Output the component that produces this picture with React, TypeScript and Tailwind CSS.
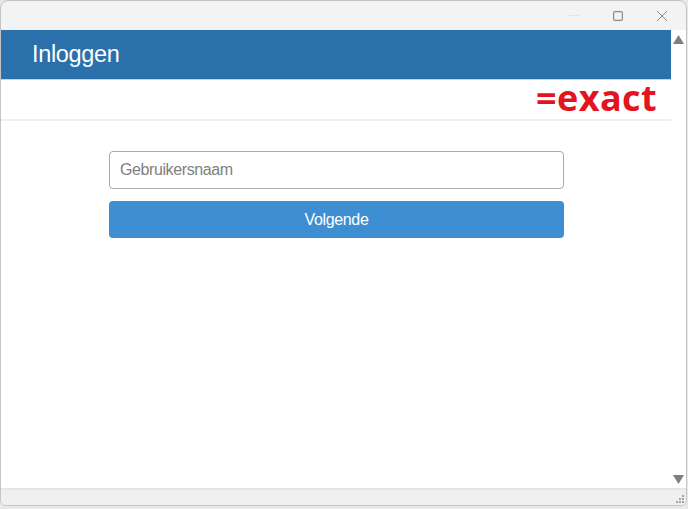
export default function App() {
  return (
    <div className="h-[509px] w-[688px] overflow-hidden bg-[#e9e9e9] pr-[1px] pb-[3px] font-['Liberation_Sans',Arial,sans-serif]">
      <div className="flex h-full flex-col overflow-hidden rounded-t-lg rounded-b-md border border-[#c4c4c4] bg-[#f3f3f3]">
        {/* title bar */}
        <div className="flex h-[29px] shrink-0 items-center justify-end">
          <div className="mr-[34px] h-px w-[10px] bg-[#e4e4e4]"></div>
          <svg width="10" height="10" viewBox="0 0 10 10" className="mr-[34px]" fill="none" stroke="#8a8a8a" strokeWidth="1.2">
            <rect x="0.6" y="0.6" width="8.8" height="8.8" rx="1.5" />
          </svg>
          <svg width="10" height="10" viewBox="0 0 10 10" className="mr-[19px]" fill="none" stroke="#8a8a8a" strokeWidth="1">
            <path d="M0 0L10 10M10 0L0 10" />
          </svg>
        </div>

        <div className="flex min-h-0 flex-1 bg-white">
          <div className="flex min-w-0 flex-1 flex-col">
            <div className="flex h-[50px] shrink-0 items-center border-b border-[#bcd6ea] bg-[#2a70aa] pl-[31px] text-[23.5px] tracking-[-0.35px] text-white">
              Inloggen
            </div>
            <div className="flex h-[41px] shrink-0 items-center justify-end border-b-2 border-[#f0f0f0] pr-[14px]">
              <span className="mb-[4px] font-['Open_Sans',sans-serif] text-[36px] leading-none font-bold tracking-[0.4px] text-[#e3131f]">=exact</span>
            </div>
            <div className="flex flex-col gap-3 pt-[30px] pr-[107px] pl-[108px]">
              <input
                placeholder="Gebruikersnaam"
                className="h-[38px] w-full rounded border border-[#a9a9a9] bg-white px-[10px] pb-[1px] text-[16px] tracking-[-0.4px] outline-none placeholder:text-[#808080]"
              />
              <button className="h-[37px] w-full rounded bg-[#3d8ed3] text-[16px] tracking-[-0.35px] text-white">Volgende</button>
            </div>
          </div>
          {/* scrollbar */}
          <div className="flex w-[15px] shrink-0 flex-col items-center justify-between pt-[5px] pb-[4px]">
            <svg width="11" height="9" viewBox="0 0 11 9" fill="#7f7f7f"><path d="M5.5 0L11 9H0Z" /></svg>
            <svg width="11" height="9" viewBox="0 0 11 9" fill="#7f7f7f"><path d="M0 0H11L5.5 9Z" /></svg>
          </div>
        </div>

        {/* status bar */}
        <div className="flex h-[17px] shrink-0 items-end justify-end border-t-2 border-[#e6e6e6] bg-[#f0f0f0] pr-[1px] pb-[1px]">
          <svg width="10" height="10" viewBox="0 0 10 10" fill="#a5a5a5">
            <rect x="7" y="1" width="2" height="2" />
            <rect x="4" y="4" width="2" height="2" />
            <rect x="7" y="4" width="2" height="2" />
            <rect x="1" y="7" width="2" height="2" />
            <rect x="4" y="7" width="2" height="2" />
            <rect x="7" y="7" width="2" height="2" />
          </svg>
        </div>
      </div>
    </div>
  )
}
